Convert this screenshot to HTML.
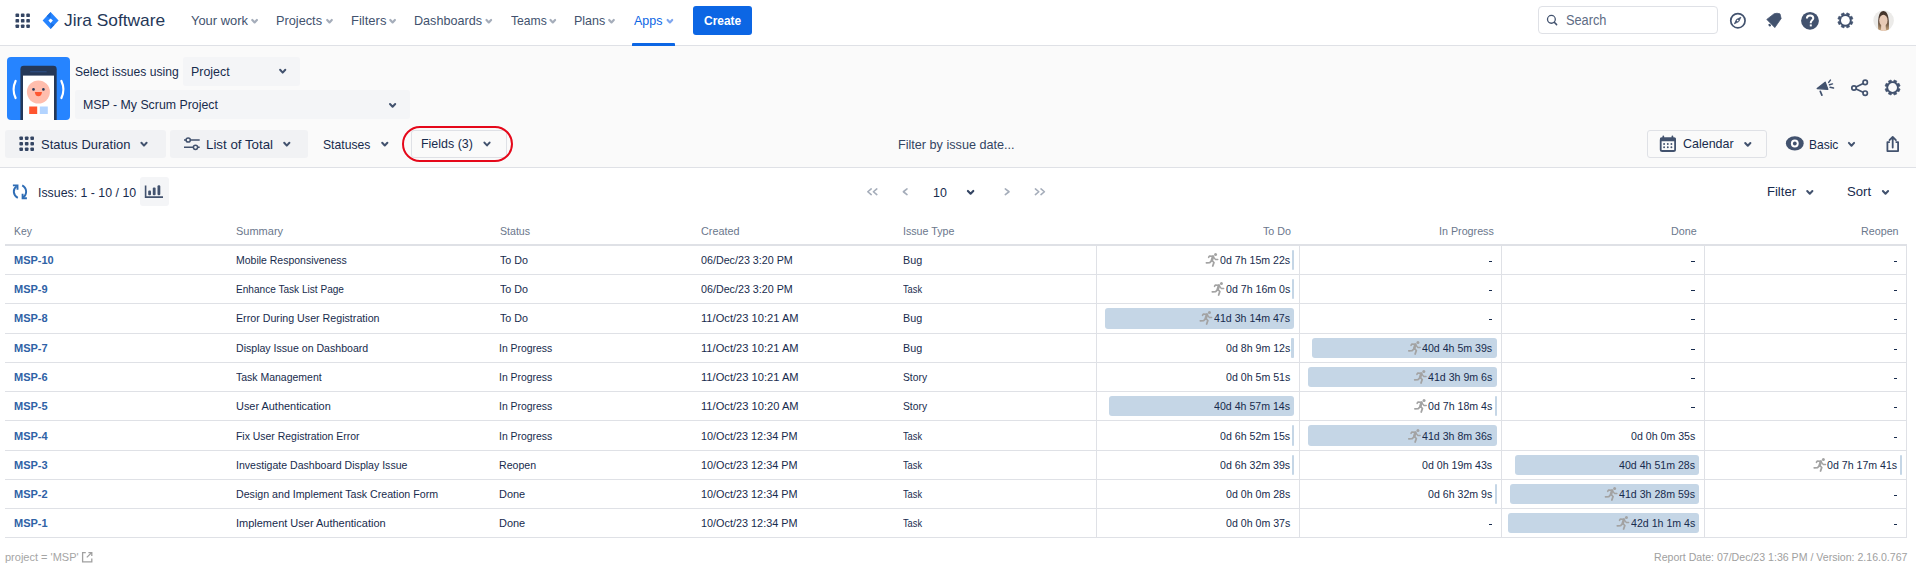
<!DOCTYPE html>
<html><head><meta charset="utf-8"><title>Jira Software</title>
<style>
html,body{margin:0;padding:0;}
body{width:1916px;height:571px;overflow:hidden;position:relative;background:#fff;font-family:"Liberation Sans",sans-serif;}
.t{position:absolute;white-space:nowrap;line-height:1;font-family:"Liberation Sans",sans-serif;}
</style></head><body>
<div style="position:absolute;left:0px;top:0px;width:1916px;height:45px;background:#fff"></div>
<div style="position:absolute;left:0px;top:45px;width:1916px;height:1px;background:#DFE1E6"></div>
<div style="position:absolute;left:0px;top:46px;width:1916px;height:121px;background:#FAFAFA"></div>
<div style="position:absolute;left:0px;top:167px;width:1916px;height:1px;background:#DFE1E6"></div>
<div class="t" style="left:63.74px;top:12px;font-size:17px;font-weight:normal;color:#253858;transform:scaleX(1.0186);transform-origin:0 0;">Jira Software</div>
<div class="t" style="left:190.68px;top:14px;font-size:13.5px;font-weight:normal;color:#42526E;transform:scaleX(0.9561);transform-origin:0 0;">Your work</div>
<div class="t" style="left:276.48px;top:14px;font-size:13.5px;font-weight:normal;color:#42526E;transform:scaleX(0.9431);transform-origin:0 0;">Projects</div>
<div class="t" style="left:350.56px;top:14px;font-size:13.5px;font-weight:normal;color:#42526E;transform:scaleX(0.9640);transform-origin:0 0;">Filters</div>
<div class="t" style="left:413.69px;top:14px;font-size:13.5px;font-weight:normal;color:#42526E;transform:scaleX(0.9338);transform-origin:0 0;">Dashboards</div>
<div class="t" style="left:510.66px;top:14px;font-size:13.5px;font-weight:normal;color:#42526E;transform:scaleX(0.8997);transform-origin:0 0;">Teams</div>
<div class="t" style="left:574.00px;top:14px;font-size:13.5px;font-weight:normal;color:#42526E;transform:scaleX(0.9255);transform-origin:0 0;">Plans</div>
<div class="t" style="left:634.00px;top:14px;font-size:13.5px;font-weight:normal;color:#0C66E4;transform:scaleX(0.9239);transform-origin:0 0;">Apps</div>
<div style="position:absolute;left:632px;top:43px;width:43px;height:3px;background:#0C66E4;border-radius:1px 1px 0 0"></div>
<div style="position:absolute;left:693px;top:6px;width:59px;height:29px;background:#0C66E4;border-radius:3px"></div>
<div class="t" style="left:703.92px;top:14px;font-size:13.5px;font-weight:bold;color:#fff;transform:scaleX(0.8860);transform-origin:0 0;">Create</div>
<div style="position:absolute;left:1538px;top:6px;width:178px;height:26px;border:1px solid #DFE1E6;border-radius:4px;background:#fff"></div>
<div class="t" style="left:1566.13px;top:13px;font-size:14px;font-weight:normal;color:#5E6C84;transform:scaleX(0.9119);transform-origin:0 0;">Search</div>
<svg style="position:absolute;left:7px;top:57px" width="63" height="63" viewBox="0 0 63 63">
<rect x="0" y="0" width="63" height="63" rx="4" fill="#2684FF"/>
<path d="M13.4 63 L13.4 12.2 Q13.4 8.8 16.8 8.8 L46.3 8.8 Q49.7 8.8 49.7 12.2 L49.7 63 Z" fill="#253858"/>
<rect x="16" y="18.6" width="31" height="44.4" fill="#fff"/>
<rect x="23.2" y="14" width="16.4" height="1.4" fill="#2B4A7C"/>
<circle cx="31.4" cy="35" r="11.5" fill="#FFBDAD"/>
<circle cx="26.5" cy="32.4" r="1.3" fill="#253858"/><circle cx="36.4" cy="32.4" r="1.3" fill="#253858"/>
<path d="M27.8 35 L35 35 Q34.6 39.2 31.4 39.2 Q28.2 39.2 27.8 35 Z" fill="#FF5630"/>
<rect x="22.2" y="49.5" width="8" height="7.5" fill="#FF5630"/>
<rect x="32.8" y="49.5" width="8" height="7.5" fill="#B3D4FF"/>
<path d="M8.6 24 Q4.6 32.5 8.6 41" fill="none" stroke="#fff" stroke-width="2.2" stroke-linecap="round"/>
<path d="M54.4 24 Q58.4 32.5 54.4 41" fill="none" stroke="#fff" stroke-width="2.2" stroke-linecap="round"/>
</svg>
<div class="t" style="left:74.96px;top:65px;font-size:13.5px;font-weight:normal;color:#172B4D;transform:scaleX(0.8968);transform-origin:0 0;">Select issues using</div>
<div style="position:absolute;left:183px;top:57px;width:117px;height:29px;background:#F4F5F7;border-radius:3px"></div>
<div class="t" style="left:190.51px;top:65px;font-size:13.5px;font-weight:normal;color:#172B4D;transform:scaleX(0.9183);transform-origin:0 0;">Project</div>
<div style="position:absolute;left:75px;top:90px;width:335px;height:29px;background:#F4F5F7;border-radius:3px"></div>
<div class="t" style="left:83.21px;top:98px;font-size:13.5px;font-weight:normal;color:#172B4D;transform:scaleX(0.9143);transform-origin:0 0;">MSP - My Scrum Project</div>
<div style="position:absolute;left:5px;top:130px;width:161px;height:28px;background:#F1F2F4;border-radius:3px"></div>
<div style="position:absolute;left:170px;top:130px;width:138px;height:28px;background:#F1F2F4;border-radius:3px"></div>
<div style="position:absolute;left:411px;top:130px;width:94px;height:26px;border:1px solid #DFE1E6;border-radius:3px;background:#FAFAFA"></div>
<div style="position:absolute;left:1647px;top:130px;width:118px;height:26px;border:1px solid #DFE1E6;border-radius:3px;background:#FAFAFA"></div>
<div style="position:absolute;left:140px;top:177px;width:29px;height:29px;background:#F4F5F7;border-radius:3px"></div>
<div style="position:absolute;left:402.2px;top:126.1px;width:106.6px;height:31.6px;border:2.6px solid #E5081A;border-radius:18px"></div>
<svg style="position:absolute;left:0;top:0" width="1916" height="571" viewBox="0 0 1916 571"><rect x="15.50" y="13.50" width="3.6" height="3.6" rx="0.9" fill="#344563"/><rect x="20.90" y="13.50" width="3.6" height="3.6" rx="0.9" fill="#344563"/><rect x="26.30" y="13.50" width="3.6" height="3.6" rx="0.9" fill="#344563"/><rect x="15.50" y="18.95" width="3.6" height="3.6" rx="0.9" fill="#344563"/><rect x="20.90" y="18.95" width="3.6" height="3.6" rx="0.9" fill="#344563"/><rect x="26.30" y="18.95" width="3.6" height="3.6" rx="0.9" fill="#344563"/><rect x="15.50" y="24.40" width="3.6" height="3.6" rx="0.9" fill="#344563"/><rect x="20.90" y="24.40" width="3.6" height="3.6" rx="0.9" fill="#344563"/><rect x="26.30" y="24.40" width="3.6" height="3.6" rx="0.9" fill="#344563"/><path d="M50.6 12.1 L58.6 20.6 L50.6 29.1 L42.6 20.6 Z M50.6 18.4 L48.4 20.6 L50.6 22.9 L52.9 20.6 Z" fill="#2684FF" fill-rule="evenodd"/><path d="M50.6 12.1 L46.6 16.35 L50.6 18.4 Z M50.6 29.1 L54.6 24.85 L50.6 22.9 Z" fill="#1A6FE0"/><path d="M252.30 20.00 L254.60 22.40 L256.90 20.00" fill="none" stroke="#A5ADBA" stroke-width="2.2" stroke-linecap="round" stroke-linejoin="round"/><path d="M327.20 20.00 L329.50 22.40 L331.80 20.00" fill="none" stroke="#A5ADBA" stroke-width="2.2" stroke-linecap="round" stroke-linejoin="round"/><path d="M390.30 20.00 L392.60 22.40 L394.90 20.00" fill="none" stroke="#A5ADBA" stroke-width="2.2" stroke-linecap="round" stroke-linejoin="round"/><path d="M486.50 20.00 L488.80 22.40 L491.10 20.00" fill="none" stroke="#A5ADBA" stroke-width="2.2" stroke-linecap="round" stroke-linejoin="round"/><path d="M550.50 20.00 L552.80 22.40 L555.10 20.00" fill="none" stroke="#A5ADBA" stroke-width="2.2" stroke-linecap="round" stroke-linejoin="round"/><path d="M609.20 20.00 L611.50 22.40 L613.80 20.00" fill="none" stroke="#A5ADBA" stroke-width="2.2" stroke-linecap="round" stroke-linejoin="round"/><path d="M667.60 20.00 L669.90 22.40 L672.20 20.00" fill="none" stroke="#7EA6EF" stroke-width="2.2" stroke-linecap="round" stroke-linejoin="round"/><circle cx="1551.4" cy="19.35" r="3.9" fill="none" stroke="#42526E" stroke-width="1.3"/><path d="M1554.3 22.3 L1556.6 24.6" stroke="#42526E" stroke-width="1.5" stroke-linecap="round"/><circle cx="1737.9" cy="20.7" r="7.15" fill="none" stroke="#42526E" stroke-width="1.7"/><path d="M1740.9 17.2 L1738.8 21.6 L1734.4 23.8 L1736.5 19.4 Z" fill="#42526E" stroke="#42526E" stroke-width="0.8" stroke-linejoin="round"/><circle cx="1737.65" cy="20.5" r="0.85" fill="#fff"/><path d="M1766.8 19.4 L1774.2 13.7 Q1777 12.7 1780 13.9 L1781.1 18.5 L1774.8 27.6 Z" fill="#42526E" stroke="#42526E" stroke-width="0.8" stroke-linejoin="round"/><ellipse cx="1769.7" cy="25.1" rx="1.5" ry="1.1" transform="rotate(40 1769.7 25.1)" fill="#42526E"/><circle cx="1810" cy="20.8" r="8.9" fill="#42526E"/><path d="M1806.9 18.6 C1806.9 16.5 1808.3 15.4 1810.1 15.4 C1811.9 15.4 1813.3 16.6 1813.3 18.3 C1813.3 20.2 1810.8 20.4 1810.8 22.6 L1810.8 23.2" fill="none" stroke="#fff" stroke-width="2" stroke-linecap="butt"/><rect x="1809.8" y="24.4" width="2" height="2" fill="#fff"/><path d="M1851.35 21.18 L1852.95 21.94 L1851.82 24.65 L1850.16 24.05 L1849.05 25.16 L1849.65 26.82 L1846.94 27.95 L1846.18 26.35 L1844.62 26.35 L1843.86 27.95 L1841.15 26.82 L1841.75 25.16 L1840.64 24.05 L1838.98 24.65 L1837.85 21.94 L1839.45 21.18 L1839.45 19.62 L1837.85 18.86 L1838.98 16.15 L1840.64 16.75 L1841.75 15.64 L1841.15 13.98 L1843.86 12.85 L1844.62 14.45 L1846.18 14.45 L1846.94 12.85 L1849.65 13.98 L1849.05 15.64 L1850.16 16.75 L1851.82 16.15 L1852.95 18.86 L1851.35 19.62 Z" fill="#42526E" stroke="#42526E" stroke-width="0.6" stroke-linejoin="round"/><circle cx="1845.4" cy="20.4" r="4.4" fill="#fff"/><defs><clipPath id="av"><circle cx="1883.6" cy="20.6" r="10.3"/></clipPath><linearGradient id="hair" x1="0" y1="0" x2="0" y2="1"><stop offset="0" stop-color="#3F3129"/><stop offset="0.55" stop-color="#5B4536"/><stop offset="1" stop-color="#CDAA80"/></linearGradient></defs><circle cx="1883.6" cy="20.6" r="10.3" fill="#ECEBE9"/><g clip-path="url(#av)"><path d="M1878.2 31 C1877.9 21 1877.8 11.3 1883.4 11.0 C1889.0 11.3 1889.1 21 1888.9 31 Z" fill="url(#hair)"/><ellipse cx="1883.4" cy="20.4" rx="4.2" ry="5.6" fill="#E8CAB6"/><path d="M1880.8 31 L1881.3 24.8 L1885.6 24.8 L1886.1 31 Z" fill="#EBD0BD"/></g><path d="M1817.2 88.6 L1825.2 82.2 L1827.8 89.3 Z" fill="#42526E" stroke="#42526E" stroke-width="1.3" stroke-linejoin="round"/><path d="M1820.3 91.4 L1821.9 95.2" stroke="#42526E" stroke-width="1.7" stroke-linecap="round"/><path d="M1828.7 82.4 L1830.4 80.1 M1829.5 84.8 L1832.5 83.9 M1830.1 87.3 L1833.5 88.1" stroke="#42526E" stroke-width="1.5" stroke-linecap="round"/><path d="M1854 88 L1865.2 82.5 M1854 88 L1865.2 93.2" stroke="#42526E" stroke-width="1.7"/><circle cx="1854" cy="88" r="2.2" fill="#FAFAFA" stroke="#42526E" stroke-width="1.7"/><circle cx="1865.2" cy="82.4" r="2.2" fill="#FAFAFA" stroke="#42526E" stroke-width="1.7"/><circle cx="1865.2" cy="93.2" r="2.2" fill="#FAFAFA" stroke="#42526E" stroke-width="1.7"/><path d="M1898.55 88.28 L1900.15 89.04 L1899.02 91.75 L1897.36 91.15 L1896.25 92.26 L1896.85 93.92 L1894.14 95.05 L1893.38 93.45 L1891.82 93.45 L1891.06 95.05 L1888.35 93.92 L1888.95 92.26 L1887.84 91.15 L1886.18 91.75 L1885.05 89.04 L1886.65 88.28 L1886.65 86.72 L1885.05 85.96 L1886.18 83.25 L1887.84 83.85 L1888.95 82.74 L1888.35 81.08 L1891.06 79.95 L1891.82 81.55 L1893.38 81.55 L1894.14 79.95 L1896.85 81.08 L1896.25 82.74 L1897.36 83.85 L1899.02 83.25 L1900.15 85.96 L1898.55 86.72 Z" fill="#42526E" stroke="#42526E" stroke-width="0.6" stroke-linejoin="round"/><circle cx="1892.6" cy="87.5" r="4.4" fill="#FAFAFA"/></svg>
<div class="t" style="left:40.82px;top:138px;font-size:13.5px;font-weight:normal;color:#172B4D;transform:scaleX(0.9614);transform-origin:0 0;">Status Duration</div>
<div class="t" style="left:205.74px;top:138px;font-size:13.5px;font-weight:normal;color:#172B4D;transform:scaleX(0.9851);transform-origin:0 0;">List of Total</div>
<div class="t" style="left:323.25px;top:138px;font-size:13.5px;font-weight:normal;color:#172B4D;transform:scaleX(0.9021);transform-origin:0 0;">Statuses</div>
<div class="t" style="left:420.50px;top:137px;font-size:13.5px;font-weight:normal;color:#172B4D;transform:scaleX(0.9220);transform-origin:0 0;">Fields (3)</div>
<div class="t" style="left:897.79px;top:138px;font-size:13px;font-weight:normal;color:#344563;transform:scaleX(0.9718);transform-origin:0 0;">Filter by issue date...</div>
<div class="t" style="left:1682.58px;top:137px;font-size:13.5px;font-weight:normal;color:#172B4D;transform:scaleX(0.9245);transform-origin:0 0;">Calendar</div>
<div class="t" style="left:1808.94px;top:138px;font-size:13.5px;font-weight:normal;color:#172B4D;transform:scaleX(0.8895);transform-origin:0 0;">Basic</div>
<div class="t" style="left:37.59px;top:186px;font-size:13.5px;font-weight:normal;color:#172B4D;transform:scaleX(0.9144);transform-origin:0 0;">Issues: 1 - 10 / 10</div>
<div class="t" style="left:932.87px;top:187px;font-size:12.5px;font-weight:normal;color:#172B4D;transform:scaleX(0.9920);transform-origin:0 0;">10</div>
<div class="t" style="left:1766.76px;top:185px;font-size:13.5px;font-weight:normal;color:#172B4D;transform:scaleX(0.9656);transform-origin:0 0;">Filter</div>
<div class="t" style="left:1846.91px;top:185px;font-size:13.5px;font-weight:normal;color:#172B4D;transform:scaleX(0.9738);transform-origin:0 0;">Sort</div>
<div class="t" style="left:13.87px;top:226px;font-size:11px;font-weight:normal;color:#6B778C;transform:scaleX(0.9395);transform-origin:0 0;">Key</div>
<div class="t" style="left:235.90px;top:226px;font-size:11px;font-weight:normal;color:#6B778C;transform:scaleX(1.0003);transform-origin:0 0;">Summary</div>
<div class="t" style="left:499.72px;top:226px;font-size:11px;font-weight:normal;color:#6B778C;transform:scaleX(0.9635);transform-origin:0 0;">Status</div>
<div class="t" style="left:701.26px;top:226px;font-size:11px;font-weight:normal;color:#6B778C;transform:scaleX(0.9831);transform-origin:0 0;">Created</div>
<div class="t" style="left:902.64px;top:226px;font-size:11px;font-weight:normal;color:#6B778C;transform:scaleX(0.9693);transform-origin:0 0;">Issue Type</div>
<div class="t" style="left:1262.94px;top:226px;font-size:11px;font-weight:normal;color:#6B778C;transform:scaleX(0.9750);transform-origin:0 0;">To Do</div>
<div class="t" style="left:1438.62px;top:226px;font-size:11px;font-weight:normal;color:#6B778C;transform:scaleX(0.9750);transform-origin:0 0;">In Progress</div>
<div class="t" style="left:1670.65px;top:226px;font-size:11px;font-weight:normal;color:#6B778C;transform:scaleX(0.9750);transform-origin:0 0;">Done</div>
<div class="t" style="left:1861.16px;top:226px;font-size:11px;font-weight:normal;color:#6B778C;transform:scaleX(0.9750);transform-origin:0 0;">Reopen</div>
<div style="position:absolute;left:5px;top:244px;width:1902px;height:2px;background:#DFE1E6"></div>
<div style="position:absolute;left:5px;top:274px;width:1902px;height:1px;background:#DFE1E6"></div>
<div style="position:absolute;left:5px;top:303px;width:1902px;height:1px;background:#DFE1E6"></div>
<div style="position:absolute;left:5px;top:333px;width:1902px;height:1px;background:#DFE1E6"></div>
<div style="position:absolute;left:5px;top:362px;width:1902px;height:1px;background:#DFE1E6"></div>
<div style="position:absolute;left:5px;top:391px;width:1902px;height:1px;background:#DFE1E6"></div>
<div style="position:absolute;left:5px;top:420px;width:1902px;height:1px;background:#DFE1E6"></div>
<div style="position:absolute;left:5px;top:450px;width:1902px;height:1px;background:#DFE1E6"></div>
<div style="position:absolute;left:5px;top:479px;width:1902px;height:1px;background:#DFE1E6"></div>
<div style="position:absolute;left:5px;top:508px;width:1902px;height:1px;background:#DFE1E6"></div>
<div style="position:absolute;left:5px;top:537px;width:1902px;height:1px;background:#DFE1E6"></div>
<div style="position:absolute;left:1096px;top:246px;width:1px;height:292px;background:#DFE1E6"></div>
<div style="position:absolute;left:1299px;top:246px;width:1px;height:292px;background:#DFE1E6"></div>
<div style="position:absolute;left:1501px;top:246px;width:1px;height:292px;background:#DFE1E6"></div>
<div style="position:absolute;left:1704px;top:246px;width:1px;height:292px;background:#DFE1E6"></div>
<div style="position:absolute;left:1906px;top:246px;width:1px;height:292px;background:#DFE1E6"></div>
<svg style="position:absolute;left:0;top:0" width="1916" height="571" viewBox="0 0 1916 571"><path d="M280.10 69.80 L282.70 72.60 L285.30 69.80" fill="none" stroke="#42526E" stroke-width="2" stroke-linecap="round" stroke-linejoin="round"/><path d="M390.00 104.00 L392.60 106.80 L395.20 104.00" fill="none" stroke="#42526E" stroke-width="2" stroke-linecap="round" stroke-linejoin="round"/><rect x="19.40" y="136.40" width="3.6" height="3.6" rx="0.9" fill="#344563"/><rect x="24.90" y="136.40" width="3.6" height="3.6" rx="0.9" fill="#344563"/><rect x="30.40" y="136.40" width="3.6" height="3.6" rx="0.9" fill="#344563"/><rect x="19.40" y="141.90" width="3.6" height="3.6" rx="0.9" fill="#344563"/><rect x="24.90" y="141.90" width="3.6" height="3.6" rx="0.9" fill="#344563"/><rect x="30.40" y="141.90" width="3.6" height="3.6" rx="0.9" fill="#344563"/><rect x="19.40" y="147.40" width="3.6" height="3.6" rx="0.9" fill="#344563"/><rect x="24.90" y="147.40" width="3.6" height="3.6" rx="0.9" fill="#344563"/><rect x="30.40" y="147.40" width="3.6" height="3.6" rx="0.9" fill="#344563"/><path d="M141.40 142.80 L144.00 145.60 L146.60 142.80" fill="none" stroke="#42526E" stroke-width="2" stroke-linecap="round" stroke-linejoin="round"/><path d="M184 140 L199.7 140 M184 147.3 L199.7 147.3" stroke="#42526E" stroke-width="1.5"/><circle cx="188.2" cy="140" r="2.1" fill="#F1F2F4" stroke="#42526E" stroke-width="1.5"/><circle cx="195.5" cy="147.3" r="2.1" fill="#F1F2F4" stroke="#42526E" stroke-width="1.5"/><path d="M284.20 142.80 L286.80 145.60 L289.40 142.80" fill="none" stroke="#42526E" stroke-width="2" stroke-linecap="round" stroke-linejoin="round"/><path d="M382.20 142.70 L384.80 145.50 L387.40 142.70" fill="none" stroke="#42526E" stroke-width="2" stroke-linecap="round" stroke-linejoin="round"/><path d="M484.40 142.60 L487.00 145.40 L489.60 142.60" fill="none" stroke="#42526E" stroke-width="2" stroke-linecap="round" stroke-linejoin="round"/><rect x="1660.7" y="138.3" width="14.4" height="12.7" rx="1.6" fill="none" stroke="#42526E" stroke-width="1.8"/><rect x="1660" y="137.6" width="15.8" height="3.6" rx="1" fill="#42526E"/><path d="M1663.3 136.3 L1663.3 138 M1672.4 136.3 L1672.4 138" stroke="#42526E" stroke-width="1.7" stroke-linecap="round"/><g fill="#42526E"><circle cx="1664.1" cy="144" r="0.95"/><circle cx="1667.8" cy="144" r="0.95"/><circle cx="1671.4" cy="144" r="0.95"/><circle cx="1664.1" cy="147.3" r="0.95"/><circle cx="1667.8" cy="147.3" r="0.95"/><circle cx="1671.4" cy="147.3" r="0.95"/></g><path d="M1745.20 143.00 L1747.80 145.80 L1750.40 143.00" fill="none" stroke="#42526E" stroke-width="2" stroke-linecap="round" stroke-linejoin="round"/><ellipse cx="1794.8" cy="143.4" rx="8.9" ry="7.2" fill="#42526E"/><circle cx="1794.8" cy="143.5" r="3.9" fill="#fff"/><circle cx="1794.8" cy="143.5" r="1.9" fill="#42526E"/><path d="M1848.90 142.90 L1851.50 145.70 L1854.10 142.90" fill="none" stroke="#42526E" stroke-width="2" stroke-linecap="round" stroke-linejoin="round"/><path d="M1889.2 142.1 L1887.4 142.1 L1887.4 151.1 L1898.1 151.1 L1898.1 142.1 L1896.3 142.1" fill="none" stroke="#42526E" stroke-width="1.8" stroke-linejoin="round" stroke-linecap="round"/><path d="M1892.7 147.6 L1892.7 137.2 M1889.5 140.2 L1892.7 136.9 L1895.9 140.2" fill="none" stroke="#42526E" stroke-width="1.8" stroke-linecap="round" stroke-linejoin="round"/><g fill="none" stroke="#2F6DB5" stroke-width="1.9" stroke-linecap="butt" stroke-linejoin="miter"><path d="M17.8 197.8 C13.0 195.2 12.4 189.2 16.6 186.2"/><path d="M12.9 185.4 L17.5 185.4 L17.5 189.8"/><path d="M22.2 185.4 C27.0 188.0 27.6 194.4 22.9 197.4"/><path d="M22.6 193.8 L22.6 198.3 L26.9 198.3"/></g><path d="M145.6 185.4 L145.6 197.1 L163 197.1" fill="none" stroke="#42526E" stroke-width="1.6"/><rect x="148.2" y="190.6" width="2.8" height="4.6" rx="1" fill="#42526E"/><rect x="152.8" y="187.6" width="2.8" height="7.6" rx="1" fill="#42526E"/><rect x="157.5" y="185.2" width="2.8" height="10" rx="1.2" fill="#42526E"/><path d="M871.20 188.90 L867.80 191.75 L871.20 194.60" fill="none" stroke="#A5ADBA" stroke-width="1.6" stroke-linecap="round" stroke-linejoin="round"/><path d="M876.80 188.90 L873.40 191.75 L876.80 194.60" fill="none" stroke="#A5ADBA" stroke-width="1.6" stroke-linecap="round" stroke-linejoin="round"/><path d="M907.00 188.90 L903.40 191.75 L907.00 194.60" fill="none" stroke="#A5ADBA" stroke-width="1.6" stroke-linecap="round" stroke-linejoin="round"/><path d="M967.90 190.90 L970.60 193.70 L973.30 190.90" fill="none" stroke="#344563" stroke-width="2.1" stroke-linecap="round" stroke-linejoin="round"/><path d="M1005.30 188.90 L1009.00 191.75 L1005.30 194.60" fill="none" stroke="#A5ADBA" stroke-width="1.6" stroke-linecap="round" stroke-linejoin="round"/><path d="M1035.40 188.90 L1038.80 191.75 L1035.40 194.60" fill="none" stroke="#A5ADBA" stroke-width="1.6" stroke-linecap="round" stroke-linejoin="round"/><path d="M1041.00 188.90 L1044.40 191.75 L1041.00 194.60" fill="none" stroke="#A5ADBA" stroke-width="1.6" stroke-linecap="round" stroke-linejoin="round"/><path d="M1807.20 191.00 L1809.80 193.80 L1812.40 191.00" fill="none" stroke="#42526E" stroke-width="2" stroke-linecap="round" stroke-linejoin="round"/><path d="M1882.90 191.00 L1885.50 193.80 L1888.10 191.00" fill="none" stroke="#42526E" stroke-width="2" stroke-linecap="round" stroke-linejoin="round"/></svg>
<div class="t" style="left:13.98px;top:255px;font-size:11px;font-weight:bold;color:#2F62A6;letter-spacing:0.000px;">MSP-10</div>
<div class="t" style="left:235.76px;top:255px;font-size:11px;font-weight:normal;color:#172B4D;transform:scaleX(0.9530);transform-origin:0 0;">Mobile Responsiveness</div>
<div class="t" style="left:499.99px;top:255px;font-size:11px;font-weight:normal;color:#172B4D;transform:scaleX(0.9733);transform-origin:0 0;">To Do</div>
<div class="t" style="left:701.37px;top:255px;font-size:11px;font-weight:normal;color:#172B4D;transform:scaleX(0.9748);transform-origin:0 0;">06/Dec/23 3:20 PM</div>
<div class="t" style="left:902.54px;top:255px;font-size:11px;font-weight:normal;color:#172B4D;transform:scaleX(0.9786);transform-origin:0 0;">Bug</div>
<div style="position:absolute;left:1292.0px;top:249.9px;width:2px;height:20.2px;background:#C5D6E6;border-radius:1px"></div>
<div class="t" style="left:1219.63px;top:255px;font-size:11px;font-weight:normal;color:#172B4D;transform:scaleX(0.9640);transform-origin:0 0;">0d 7h 15m 22s</div>
<div style="position:absolute;left:1488.7px;top:261px;width:3.3px;height:1.4px;background:#172B4D"></div>
<div style="position:absolute;left:1691.3px;top:261px;width:3.3px;height:1.4px;background:#172B4D"></div>
<div style="position:absolute;left:1893.9px;top:261px;width:3.3px;height:1.4px;background:#172B4D"></div>
<div class="t" style="left:13.98px;top:284px;font-size:11px;font-weight:bold;color:#2F62A6;letter-spacing:0.000px;">MSP-9</div>
<div class="t" style="left:235.79px;top:284px;font-size:11px;font-weight:normal;color:#172B4D;transform:scaleX(0.9164);transform-origin:0 0;">Enhance Task List Page</div>
<div class="t" style="left:499.99px;top:284px;font-size:11px;font-weight:normal;color:#172B4D;transform:scaleX(0.9733);transform-origin:0 0;">To Do</div>
<div class="t" style="left:701.37px;top:284px;font-size:11px;font-weight:normal;color:#172B4D;transform:scaleX(0.9748);transform-origin:0 0;">06/Dec/23 3:20 PM</div>
<div class="t" style="left:903.22px;top:284px;font-size:11px;font-weight:normal;color:#172B4D;transform:scaleX(0.8398);transform-origin:0 0;">Task</div>
<div style="position:absolute;left:1292.0px;top:278.9px;width:2px;height:20.2px;background:#C5D6E6;border-radius:1px"></div>
<div class="t" style="left:1225.51px;top:284px;font-size:11px;font-weight:normal;color:#172B4D;transform:scaleX(0.9640);transform-origin:0 0;">0d 7h 16m 0s</div>
<div style="position:absolute;left:1488.7px;top:290px;width:3.3px;height:1.4px;background:#172B4D"></div>
<div style="position:absolute;left:1691.3px;top:290px;width:3.3px;height:1.4px;background:#172B4D"></div>
<div style="position:absolute;left:1893.9px;top:290px;width:3.3px;height:1.4px;background:#172B4D"></div>
<div class="t" style="left:13.98px;top:313px;font-size:11px;font-weight:bold;color:#2F62A6;letter-spacing:0.000px;">MSP-8</div>
<div class="t" style="left:235.75px;top:313px;font-size:11px;font-weight:normal;color:#172B4D;transform:scaleX(0.9702);transform-origin:0 0;">Error During User Registration</div>
<div class="t" style="left:499.99px;top:313px;font-size:11px;font-weight:normal;color:#172B4D;transform:scaleX(0.9733);transform-origin:0 0;">To Do</div>
<div class="t" style="left:700.97px;top:313px;font-size:11px;font-weight:normal;color:#172B4D;transform:scaleX(1.0121);transform-origin:0 0;">11/Oct/23 10:21 AM</div>
<div class="t" style="left:902.54px;top:313px;font-size:11px;font-weight:normal;color:#172B4D;transform:scaleX(0.9786);transform-origin:0 0;">Bug</div>
<div style="position:absolute;left:1105.0px;top:308.4px;width:189px;height:20.2px;background:#C5D6E6;border-radius:3px"></div>
<div class="t" style="left:1213.74px;top:313px;font-size:11px;font-weight:normal;color:#172B4D;transform:scaleX(0.9640);transform-origin:0 0;">41d 3h 14m 47s</div>
<div style="position:absolute;left:1488.7px;top:319px;width:3.3px;height:1.4px;background:#172B4D"></div>
<div style="position:absolute;left:1691.3px;top:319px;width:3.3px;height:1.4px;background:#172B4D"></div>
<div style="position:absolute;left:1893.9px;top:319px;width:3.3px;height:1.4px;background:#172B4D"></div>
<div class="t" style="left:13.98px;top:343px;font-size:11px;font-weight:bold;color:#2F62A6;letter-spacing:0.000px;">MSP-7</div>
<div class="t" style="left:235.75px;top:343px;font-size:11px;font-weight:normal;color:#172B4D;transform:scaleX(0.9606);transform-origin:0 0;">Display Issue on Dashboard</div>
<div class="t" style="left:499.26px;top:343px;font-size:11px;font-weight:normal;color:#172B4D;transform:scaleX(0.9473);transform-origin:0 0;">In Progress</div>
<div class="t" style="left:700.97px;top:343px;font-size:11px;font-weight:normal;color:#172B4D;transform:scaleX(1.0121);transform-origin:0 0;">11/Oct/23 10:21 AM</div>
<div class="t" style="left:902.54px;top:343px;font-size:11px;font-weight:normal;color:#172B4D;transform:scaleX(0.9786);transform-origin:0 0;">Bug</div>
<div style="position:absolute;left:1290.5px;top:337.9px;width:3.5px;height:20.2px;background:#C5D6E6;border-radius:1px"></div>
<div class="t" style="left:1225.51px;top:343px;font-size:11px;font-weight:normal;color:#172B4D;transform:scaleX(0.9640);transform-origin:0 0;">0d 8h 9m 12s</div>
<div style="position:absolute;left:1311.6px;top:337.9px;width:185px;height:20.2px;background:#C5D6E6;border-radius:3px"></div>
<div class="t" style="left:1422.23px;top:343px;font-size:11px;font-weight:normal;color:#172B4D;transform:scaleX(0.9640);transform-origin:0 0;">40d 4h 5m 39s</div>
<div style="position:absolute;left:1691.3px;top:349px;width:3.3px;height:1.4px;background:#172B4D"></div>
<div style="position:absolute;left:1893.9px;top:349px;width:3.3px;height:1.4px;background:#172B4D"></div>
<div class="t" style="left:13.98px;top:372px;font-size:11px;font-weight:bold;color:#2F62A6;letter-spacing:0.000px;">MSP-6</div>
<div class="t" style="left:236.39px;top:372px;font-size:11px;font-weight:normal;color:#172B4D;transform:scaleX(0.9532);transform-origin:0 0;">Task Management</div>
<div class="t" style="left:499.26px;top:372px;font-size:11px;font-weight:normal;color:#172B4D;transform:scaleX(0.9473);transform-origin:0 0;">In Progress</div>
<div class="t" style="left:700.97px;top:372px;font-size:11px;font-weight:normal;color:#172B4D;transform:scaleX(1.0121);transform-origin:0 0;">11/Oct/23 10:21 AM</div>
<div class="t" style="left:902.94px;top:372px;font-size:11px;font-weight:normal;color:#172B4D;transform:scaleX(0.9369);transform-origin:0 0;">Story</div>
<div class="t" style="left:1225.51px;top:372px;font-size:11px;font-weight:normal;color:#172B4D;transform:scaleX(0.9640);transform-origin:0 0;">0d 0h 5m 51s</div>
<div style="position:absolute;left:1307.9px;top:366.9px;width:188.7px;height:20.2px;background:#C5D6E6;border-radius:3px"></div>
<div class="t" style="left:1428.11px;top:372px;font-size:11px;font-weight:normal;color:#172B4D;transform:scaleX(0.9640);transform-origin:0 0;">41d 3h 9m 6s</div>
<div style="position:absolute;left:1691.3px;top:378px;width:3.3px;height:1.4px;background:#172B4D"></div>
<div style="position:absolute;left:1893.9px;top:378px;width:3.3px;height:1.4px;background:#172B4D"></div>
<div class="t" style="left:13.98px;top:401px;font-size:11px;font-weight:bold;color:#2F62A6;letter-spacing:0.000px;">MSP-5</div>
<div class="t" style="left:235.78px;top:401px;font-size:11px;font-weight:normal;color:#172B4D;transform:scaleX(0.9933);transform-origin:0 0;">User Authentication</div>
<div class="t" style="left:499.26px;top:401px;font-size:11px;font-weight:normal;color:#172B4D;transform:scaleX(0.9473);transform-origin:0 0;">In Progress</div>
<div class="t" style="left:700.97px;top:401px;font-size:11px;font-weight:normal;color:#172B4D;transform:scaleX(1.0121);transform-origin:0 0;">11/Oct/23 10:20 AM</div>
<div class="t" style="left:902.94px;top:401px;font-size:11px;font-weight:normal;color:#172B4D;transform:scaleX(0.9369);transform-origin:0 0;">Story</div>
<div style="position:absolute;left:1109.0px;top:395.9px;width:185px;height:20.2px;background:#C5D6E6;border-radius:3px"></div>
<div class="t" style="left:1213.74px;top:401px;font-size:11px;font-weight:normal;color:#172B4D;transform:scaleX(0.9640);transform-origin:0 0;">40d 4h 57m 14s</div>
<div style="position:absolute;left:1494.6px;top:395.9px;width:2px;height:20.2px;background:#C5D6E6;border-radius:1px"></div>
<div class="t" style="left:1428.11px;top:401px;font-size:11px;font-weight:normal;color:#172B4D;transform:scaleX(0.9640);transform-origin:0 0;">0d 7h 18m 4s</div>
<div style="position:absolute;left:1691.3px;top:407px;width:3.3px;height:1.4px;background:#172B4D"></div>
<div style="position:absolute;left:1893.9px;top:407px;width:3.3px;height:1.4px;background:#172B4D"></div>
<div class="t" style="left:13.98px;top:431px;font-size:11px;font-weight:bold;color:#2F62A6;letter-spacing:0.000px;">MSP-4</div>
<div class="t" style="left:235.77px;top:431px;font-size:11px;font-weight:normal;color:#172B4D;transform:scaleX(0.9486);transform-origin:0 0;">Fix User Registration Error</div>
<div class="t" style="left:499.26px;top:431px;font-size:11px;font-weight:normal;color:#172B4D;transform:scaleX(0.9473);transform-origin:0 0;">In Progress</div>
<div class="t" style="left:700.99px;top:431px;font-size:11px;font-weight:normal;color:#172B4D;transform:scaleX(0.9866);transform-origin:0 0;">10/Oct/23 12:34 PM</div>
<div class="t" style="left:903.22px;top:431px;font-size:11px;font-weight:normal;color:#172B4D;transform:scaleX(0.8398);transform-origin:0 0;">Task</div>
<div style="position:absolute;left:1292.0px;top:425.4px;width:2px;height:20.2px;background:#C5D6E6;border-radius:1px"></div>
<div class="t" style="left:1219.63px;top:431px;font-size:11px;font-weight:normal;color:#172B4D;transform:scaleX(0.9640);transform-origin:0 0;">0d 6h 52m 15s</div>
<div style="position:absolute;left:1307.9px;top:425.4px;width:188.7px;height:20.2px;background:#C5D6E6;border-radius:3px"></div>
<div class="t" style="left:1422.23px;top:431px;font-size:11px;font-weight:normal;color:#172B4D;transform:scaleX(0.9640);transform-origin:0 0;">41d 3h 8m 36s</div>
<div class="t" style="left:1630.71px;top:431px;font-size:11px;font-weight:normal;color:#172B4D;transform:scaleX(0.9640);transform-origin:0 0;">0d 0h 0m 35s</div>
<div style="position:absolute;left:1893.9px;top:437px;width:3.3px;height:1.4px;background:#172B4D"></div>
<div class="t" style="left:13.98px;top:460px;font-size:11px;font-weight:bold;color:#2F62A6;letter-spacing:0.000px;">MSP-3</div>
<div class="t" style="left:235.65px;top:460px;font-size:11px;font-weight:normal;color:#172B4D;transform:scaleX(0.9602);transform-origin:0 0;">Investigate Dashboard Display Issue</div>
<div class="t" style="left:499.35px;top:460px;font-size:11px;font-weight:normal;color:#172B4D;transform:scaleX(0.9619);transform-origin:0 0;">Reopen</div>
<div class="t" style="left:700.99px;top:460px;font-size:11px;font-weight:normal;color:#172B4D;transform:scaleX(0.9866);transform-origin:0 0;">10/Oct/23 12:34 PM</div>
<div class="t" style="left:903.22px;top:460px;font-size:11px;font-weight:normal;color:#172B4D;transform:scaleX(0.8398);transform-origin:0 0;">Task</div>
<div style="position:absolute;left:1292.0px;top:454.9px;width:2px;height:20.2px;background:#C5D6E6;border-radius:1px"></div>
<div class="t" style="left:1219.63px;top:460px;font-size:11px;font-weight:normal;color:#172B4D;transform:scaleX(0.9640);transform-origin:0 0;">0d 6h 32m 39s</div>
<div class="t" style="left:1422.23px;top:460px;font-size:11px;font-weight:normal;color:#172B4D;transform:scaleX(0.9640);transform-origin:0 0;">0d 0h 19m 43s</div>
<div style="position:absolute;left:1514.6px;top:454.9px;width:184.6px;height:20.2px;background:#C5D6E6;border-radius:3px"></div>
<div class="t" style="left:1618.94px;top:460px;font-size:11px;font-weight:normal;color:#172B4D;transform:scaleX(0.9640);transform-origin:0 0;">40d 4h 51m 28s</div>
<div style="position:absolute;left:1899.8px;top:454.9px;width:2px;height:20.2px;background:#C5D6E6;border-radius:1px"></div>
<div class="t" style="left:1827.43px;top:460px;font-size:11px;font-weight:normal;color:#172B4D;transform:scaleX(0.9640);transform-origin:0 0;">0d 7h 17m 41s</div>
<div class="t" style="left:13.98px;top:489px;font-size:11px;font-weight:bold;color:#2F62A6;letter-spacing:0.000px;">MSP-2</div>
<div class="t" style="left:235.75px;top:489px;font-size:11px;font-weight:normal;color:#172B4D;transform:scaleX(0.9672);transform-origin:0 0;">Design and Implement Task Creation Form</div>
<div class="t" style="left:499.32px;top:489px;font-size:11px;font-weight:normal;color:#172B4D;transform:scaleX(0.9954);transform-origin:0 0;">Done</div>
<div class="t" style="left:700.99px;top:489px;font-size:11px;font-weight:normal;color:#172B4D;transform:scaleX(0.9866);transform-origin:0 0;">10/Oct/23 12:34 PM</div>
<div class="t" style="left:903.22px;top:489px;font-size:11px;font-weight:normal;color:#172B4D;transform:scaleX(0.8398);transform-origin:0 0;">Task</div>
<div class="t" style="left:1225.51px;top:489px;font-size:11px;font-weight:normal;color:#172B4D;transform:scaleX(0.9640);transform-origin:0 0;">0d 0h 0m 28s</div>
<div style="position:absolute;left:1494.6px;top:483.9px;width:2px;height:20.2px;background:#C5D6E6;border-radius:1px"></div>
<div class="t" style="left:1428.11px;top:489px;font-size:11px;font-weight:normal;color:#172B4D;transform:scaleX(0.9640);transform-origin:0 0;">0d 6h 32m 9s</div>
<div style="position:absolute;left:1510.4px;top:483.9px;width:188.8px;height:20.2px;background:#C5D6E6;border-radius:3px"></div>
<div class="t" style="left:1618.94px;top:489px;font-size:11px;font-weight:normal;color:#172B4D;transform:scaleX(0.9640);transform-origin:0 0;">41d 3h 28m 59s</div>
<div style="position:absolute;left:1893.9px;top:495px;width:3.3px;height:1.4px;background:#172B4D"></div>
<div class="t" style="left:13.98px;top:518px;font-size:11px;font-weight:bold;color:#2F62A6;letter-spacing:0.000px;">MSP-1</div>
<div class="t" style="left:235.61px;top:518px;font-size:11px;font-weight:normal;color:#172B4D;transform:scaleX(0.9989);transform-origin:0 0;">Implement User Authentication</div>
<div class="t" style="left:499.32px;top:518px;font-size:11px;font-weight:normal;color:#172B4D;transform:scaleX(0.9954);transform-origin:0 0;">Done</div>
<div class="t" style="left:700.99px;top:518px;font-size:11px;font-weight:normal;color:#172B4D;transform:scaleX(0.9866);transform-origin:0 0;">10/Oct/23 12:34 PM</div>
<div class="t" style="left:903.22px;top:518px;font-size:11px;font-weight:normal;color:#172B4D;transform:scaleX(0.8398);transform-origin:0 0;">Task</div>
<div class="t" style="left:1225.51px;top:518px;font-size:11px;font-weight:normal;color:#172B4D;transform:scaleX(0.9640);transform-origin:0 0;">0d 0h 0m 37s</div>
<div style="position:absolute;left:1488.7px;top:524px;width:3.3px;height:1.4px;background:#172B4D"></div>
<div style="position:absolute;left:1507.6px;top:512.9px;width:191.6px;height:20.2px;background:#C5D6E6;border-radius:3px"></div>
<div class="t" style="left:1630.71px;top:518px;font-size:11px;font-weight:normal;color:#172B4D;transform:scaleX(0.9640);transform-origin:0 0;">42d 1h 1m 4s</div>
<div style="position:absolute;left:1893.9px;top:524px;width:3.3px;height:1.4px;background:#172B4D"></div>
<svg style="position:absolute;left:0;top:0" width="1916" height="571" viewBox="0 0 1916 571"><g transform="translate(1203.15 250.00)" fill="none" stroke="#A3A3A3" stroke-linecap="round" stroke-linejoin="round"><path d="M9.9 6.5 L8.7 10.3" stroke-width="2.6"/><path d="M9.6 6.2 L6.4 6.0 L5.5 7.3" stroke-width="1.6"/><path d="M10.6 7.4 L12.2 9.4 L14.6 9.5" stroke-width="1.5"/><path d="M8.9 10.5 L10.8 12.5 L9.6 16.0" stroke-width="1.8"/><path d="M8.4 10.9 L6.6 12.6 L3.3 12.8" stroke-width="1.8"/><circle cx="12.4" cy="4.4" r="1.5" fill="#A3A3A3" stroke="none"/></g><g transform="translate(1209.04 279.00)" fill="none" stroke="#A3A3A3" stroke-linecap="round" stroke-linejoin="round"><path d="M9.9 6.5 L8.7 10.3" stroke-width="2.6"/><path d="M9.6 6.2 L6.4 6.0 L5.5 7.3" stroke-width="1.6"/><path d="M10.6 7.4 L12.2 9.4 L14.6 9.5" stroke-width="1.5"/><path d="M8.9 10.5 L10.8 12.5 L9.6 16.0" stroke-width="1.8"/><path d="M8.4 10.9 L6.6 12.6 L3.3 12.8" stroke-width="1.8"/><circle cx="12.4" cy="4.4" r="1.5" fill="#A3A3A3" stroke="none"/></g><g transform="translate(1197.05 308.00)" fill="none" stroke="#A3A3A3" stroke-linecap="round" stroke-linejoin="round"><path d="M9.9 6.5 L8.7 10.3" stroke-width="2.6"/><path d="M9.6 6.2 L6.4 6.0 L5.5 7.3" stroke-width="1.6"/><path d="M10.6 7.4 L12.2 9.4 L14.6 9.5" stroke-width="1.5"/><path d="M8.9 10.5 L10.8 12.5 L9.6 16.0" stroke-width="1.8"/><path d="M8.4 10.9 L6.6 12.6 L3.3 12.8" stroke-width="1.8"/><circle cx="12.4" cy="4.4" r="1.5" fill="#A3A3A3" stroke="none"/></g><g transform="translate(1405.54 338.00)" fill="none" stroke="#A3A3A3" stroke-linecap="round" stroke-linejoin="round"><path d="M9.9 6.5 L8.7 10.3" stroke-width="2.6"/><path d="M9.6 6.2 L6.4 6.0 L5.5 7.3" stroke-width="1.6"/><path d="M10.6 7.4 L12.2 9.4 L14.6 9.5" stroke-width="1.5"/><path d="M8.9 10.5 L10.8 12.5 L9.6 16.0" stroke-width="1.8"/><path d="M8.4 10.9 L6.6 12.6 L3.3 12.8" stroke-width="1.8"/><circle cx="12.4" cy="4.4" r="1.5" fill="#A3A3A3" stroke="none"/></g><g transform="translate(1411.42 367.00)" fill="none" stroke="#A3A3A3" stroke-linecap="round" stroke-linejoin="round"><path d="M9.9 6.5 L8.7 10.3" stroke-width="2.6"/><path d="M9.6 6.2 L6.4 6.0 L5.5 7.3" stroke-width="1.6"/><path d="M10.6 7.4 L12.2 9.4 L14.6 9.5" stroke-width="1.5"/><path d="M8.9 10.5 L10.8 12.5 L9.6 16.0" stroke-width="1.8"/><path d="M8.4 10.9 L6.6 12.6 L3.3 12.8" stroke-width="1.8"/><circle cx="12.4" cy="4.4" r="1.5" fill="#A3A3A3" stroke="none"/></g><g transform="translate(1411.64 396.00)" fill="none" stroke="#A3A3A3" stroke-linecap="round" stroke-linejoin="round"><path d="M9.9 6.5 L8.7 10.3" stroke-width="2.6"/><path d="M9.6 6.2 L6.4 6.0 L5.5 7.3" stroke-width="1.6"/><path d="M10.6 7.4 L12.2 9.4 L14.6 9.5" stroke-width="1.5"/><path d="M8.9 10.5 L10.8 12.5 L9.6 16.0" stroke-width="1.8"/><path d="M8.4 10.9 L6.6 12.6 L3.3 12.8" stroke-width="1.8"/><circle cx="12.4" cy="4.4" r="1.5" fill="#A3A3A3" stroke="none"/></g><g transform="translate(1405.54 426.00)" fill="none" stroke="#A3A3A3" stroke-linecap="round" stroke-linejoin="round"><path d="M9.9 6.5 L8.7 10.3" stroke-width="2.6"/><path d="M9.6 6.2 L6.4 6.0 L5.5 7.3" stroke-width="1.6"/><path d="M10.6 7.4 L12.2 9.4 L14.6 9.5" stroke-width="1.5"/><path d="M8.9 10.5 L10.8 12.5 L9.6 16.0" stroke-width="1.8"/><path d="M8.4 10.9 L6.6 12.6 L3.3 12.8" stroke-width="1.8"/><circle cx="12.4" cy="4.4" r="1.5" fill="#A3A3A3" stroke="none"/></g><g transform="translate(1810.95 455.00)" fill="none" stroke="#A3A3A3" stroke-linecap="round" stroke-linejoin="round"><path d="M9.9 6.5 L8.7 10.3" stroke-width="2.6"/><path d="M9.6 6.2 L6.4 6.0 L5.5 7.3" stroke-width="1.6"/><path d="M10.6 7.4 L12.2 9.4 L14.6 9.5" stroke-width="1.5"/><path d="M8.9 10.5 L10.8 12.5 L9.6 16.0" stroke-width="1.8"/><path d="M8.4 10.9 L6.6 12.6 L3.3 12.8" stroke-width="1.8"/><circle cx="12.4" cy="4.4" r="1.5" fill="#A3A3A3" stroke="none"/></g><g transform="translate(1602.25 484.00)" fill="none" stroke="#A3A3A3" stroke-linecap="round" stroke-linejoin="round"><path d="M9.9 6.5 L8.7 10.3" stroke-width="2.6"/><path d="M9.6 6.2 L6.4 6.0 L5.5 7.3" stroke-width="1.6"/><path d="M10.6 7.4 L12.2 9.4 L14.6 9.5" stroke-width="1.5"/><path d="M8.9 10.5 L10.8 12.5 L9.6 16.0" stroke-width="1.8"/><path d="M8.4 10.9 L6.6 12.6 L3.3 12.8" stroke-width="1.8"/><circle cx="12.4" cy="4.4" r="1.5" fill="#A3A3A3" stroke="none"/></g><g transform="translate(1614.02 513.00)" fill="none" stroke="#A3A3A3" stroke-linecap="round" stroke-linejoin="round"><path d="M9.9 6.5 L8.7 10.3" stroke-width="2.6"/><path d="M9.6 6.2 L6.4 6.0 L5.5 7.3" stroke-width="1.6"/><path d="M10.6 7.4 L12.2 9.4 L14.6 9.5" stroke-width="1.5"/><path d="M8.9 10.5 L10.8 12.5 L9.6 16.0" stroke-width="1.8"/><path d="M8.4 10.9 L6.6 12.6 L3.3 12.8" stroke-width="1.8"/><circle cx="12.4" cy="4.4" r="1.5" fill="#A3A3A3" stroke="none"/></g></svg>
<div class="t" style="left:4.59px;top:552px;font-size:11px;font-weight:normal;color:#A5A5A5;transform:scaleX(0.9997);transform-origin:0 0;">project = 'MSP'</div>
<div class="t" style="left:1654.25px;top:552px;font-size:11px;font-weight:normal;color:#A0A0A0;transform:scaleX(0.9617);transform-origin:0 0;">Report Date: 07/Dec/23 1:36 PM / Version: 2.16.0.767</div>
<svg style="position:absolute;left:0;top:0" width="1916" height="571" viewBox="0 0 1916 571"><path d="M85.8 552.6 L82.6 552.6 L82.6 561.8 L91.8 561.8 L91.8 558.6" fill="none" stroke="#A0A0A0" stroke-width="1.3"/><path d="M86.8 557.4 L91.6 552.6 M88.4 552.6 L91.8 552.6 L91.8 556" fill="none" stroke="#A0A0A0" stroke-width="1.3"/></svg>
</body></html>
